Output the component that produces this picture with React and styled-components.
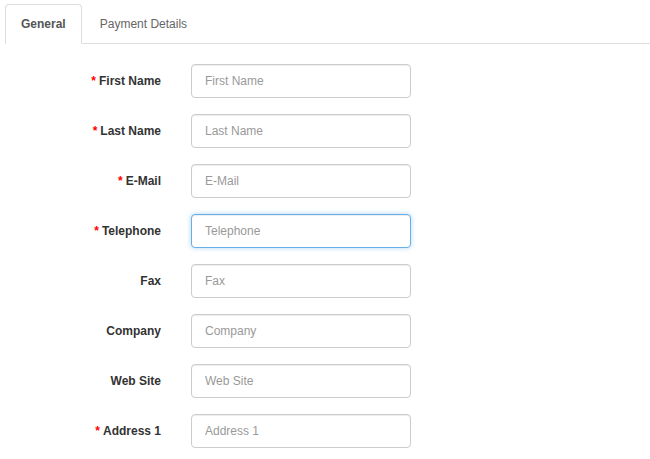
import React from "react";
import styled, { createGlobalStyle, css } from "styled-components";

const Global = createGlobalStyle`
  html, body { margin: 0; padding: 0; background: #fff; }
  body { font-family: "Liberation Sans", Arial, sans-serif; font-size: 12px; color: #333; }
  * { box-sizing: border-box; }
`;

const Page = styled.div`
  padding: 4px 0 0 5px;
`;

const TabBar = styled.ul`
  display: flex;
  margin: 0;
  padding: 0;
  list-style: none;
  border-bottom: 1px solid #ddd;
`;

const Tab = styled.li`
  margin-right: 2px;
  margin-bottom: -1px;
  padding: 10px 15px;
  line-height: 18px;
  font-size: 12px;
  border: 1px solid transparent;
  border-radius: 4px 4px 0 0;
  color: #666;
  ${(p) =>
    p.$active &&
    css`
      background: #fff;
      border-color: #ddd #ddd transparent;
      font-weight: bold;
      color: #555;
    `}
`;

const Form = styled.div`
  display: flex;
  flex-direction: column;
  gap: 16px;
  padding-top: 20px;
`;

const Row = styled.div`
  display: grid;
  grid-template-columns: 156px 220px;
  column-gap: 30px;
  align-items: center;
`;

const Label = styled.label`
  text-align: right;
  font-weight: bold;
  font-size: 12px;
  color: #333;
`;

const Req = styled.span`
  color: #f00;
  font-weight: bold;
  margin-right: 3px;
`;

const Input = styled.input`
  display: block;
  width: 220px;
  height: 34px;
  padding: 6px 12px 6px 13px;
  font-family: "Liberation Sans", Arial, sans-serif;
  font-size: 12px;
  color: #555;
  background: #fff;
  border: 1px solid #ccc;
  border-radius: 4px;
  box-shadow: inset 0 1px 1px rgba(0, 0, 0, 0.075);
  outline: none;
  &::placeholder { color: #999; }
  ${(p) =>
    p.$focused &&
    css`
      border-color: #66afe9;
      box-shadow: inset 0 1px 1px rgba(0, 0, 0, 0.075), 0 0 5px rgba(102, 175, 233, 0.5);
    `}
`;

const fields = [
  { label: "First Name", req: true },
  { label: "Last Name", req: true },
  { label: "E-Mail", req: true },
  { label: "Telephone", req: true, focus: true },
  { label: "Fax" },
  { label: "Company" },
  { label: "Web Site" },
  { label: "Address 1", req: true },
];

export default function App() {
  return (
    <>
      <Global />
      <Page>
        <TabBar>
          <Tab $active>General</Tab>
          <Tab>Payment Details</Tab>
        </TabBar>
        <Form>
          {fields.map((f) => (
            <Row key={f.label}>
              <Label>
                {f.req && <Req>*</Req>}
                {f.label}
              </Label>
              <Input placeholder={f.label} $focused={f.focus} autoFocus={f.focus} />
            </Row>
          ))}
        </Form>
      </Page>
    </>
  );
}
